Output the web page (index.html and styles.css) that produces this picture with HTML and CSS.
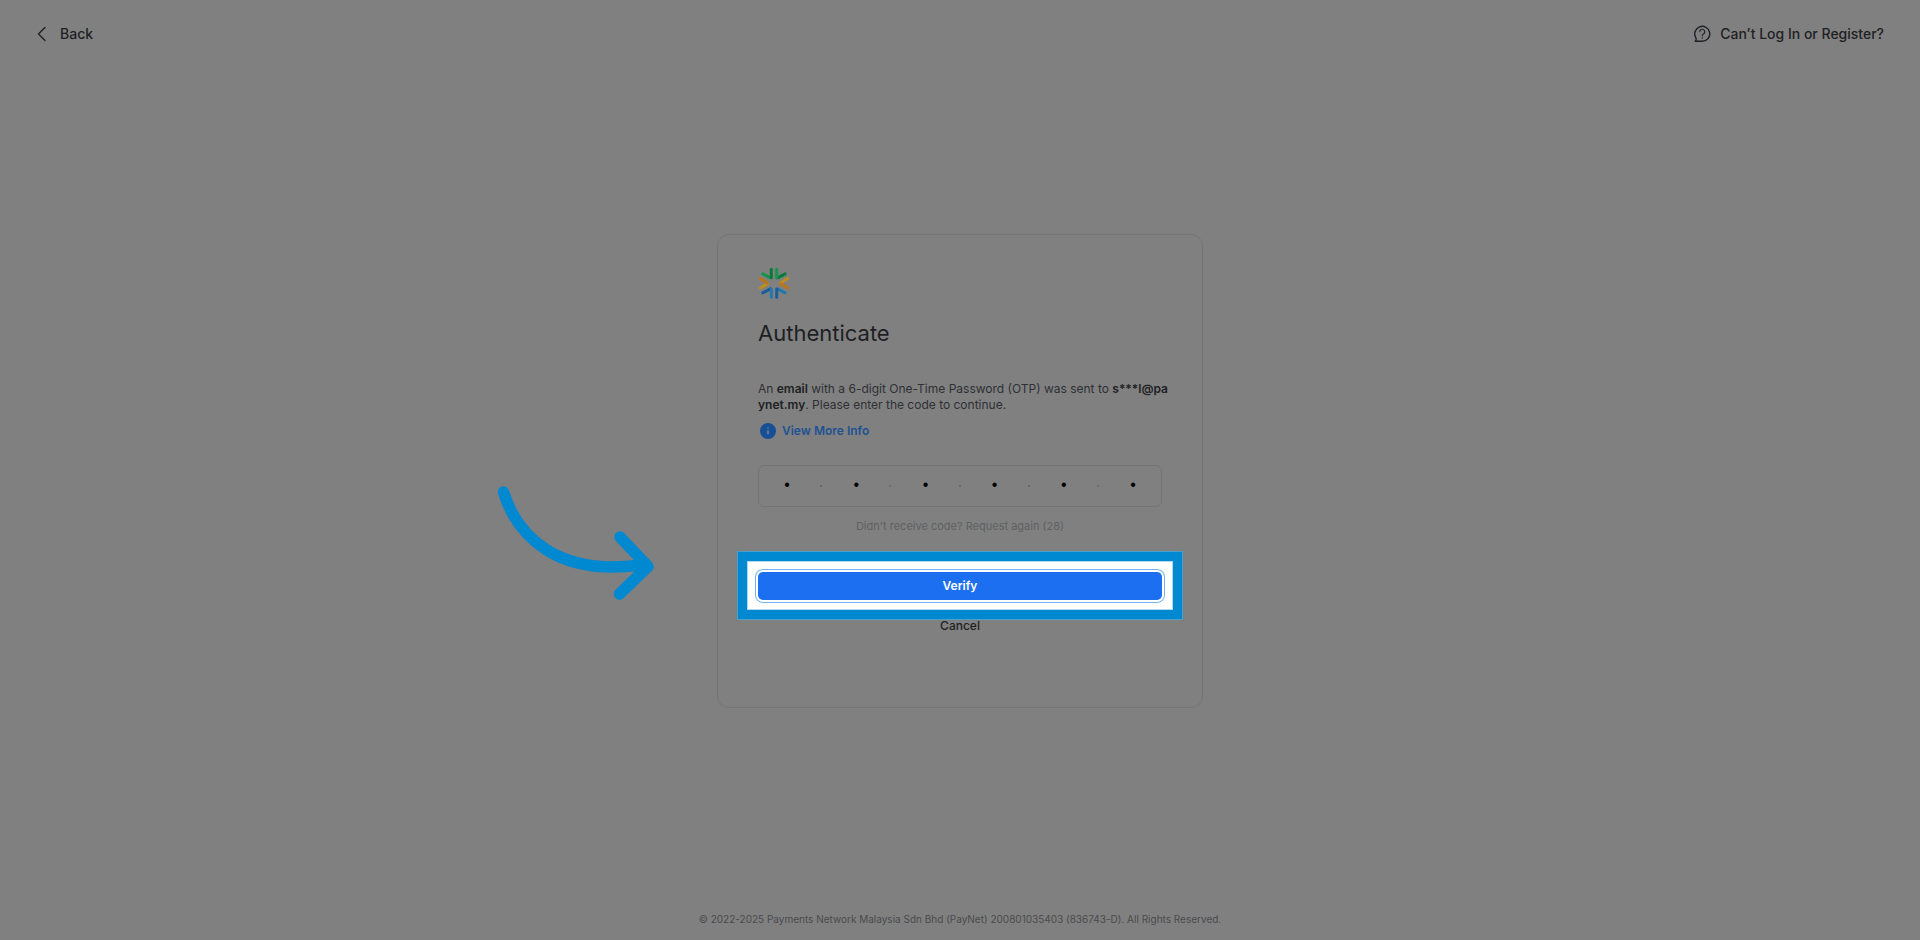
FILE: index.html
```html
<!DOCTYPE html>
<html lang="en">
<head>
<meta charset="utf-8">
<title>Authenticate</title>
<link rel="stylesheet" href="styles.css">
</head>
<body class="page">
  <header class="topbar">
    <button class="top-button" type="button">
      <svg class="top-icon" viewBox="0 0 18 18" aria-hidden="true"><path d="M12 2.500 5.500 9l6.500 6.500"/></svg>
      Back
    </button>
    <button class="top-button" type="button">
      <svg class="top-icon" viewBox="0 0 18 18" aria-hidden="true"><path d="M2.200 16.300h7A7.500 7.500 0 1 0 2.900 12.800c.4.700.3 1.500 0 2.200z"/><path stroke-width="1.1" d="M6.700 6.800a2.500 2.500 0 1 1 3.700 2.100c-.9.500-1.200.9-1.200 1.900M9.200 12.600v.6"/></svg>
      Can’t Log In or Register?
    </button>
  </header>

  <main class="card">
    <svg class="logo" viewBox="0 0 32 32" role="img" aria-label="PayNet">
      <g fill="none" stroke-width="3" stroke-linecap="round" stroke-linejoin="round">
        <path stroke="#14944c" d="M4.800 6.900 12.500 10.800"/><path stroke="#087a38" d="M13.300 2.300V10.800"/>
        <path stroke="#087a38" d="M27.200 6.900 19.500 10.800"/><path stroke="#14944c" d="M18.700 2.300V10.800"/>
        <path stroke="#bd8d20" d="M2.300 21 9.200 17"/><path stroke="#b97518" d="M2.300 11.500 9.200 15.700"/>
        <path stroke="#bd8d20" d="M29.700 11.500 22.800 15.700"/><path stroke="#b97518" d="M29.700 21 22.800 17"/>
        <path stroke="#1b5d99" d="M4.800 25.800 12.500 21.900"/><path stroke="#2078ad" d="M13.300 30.300V21.900"/>
        <path stroke="#2078ad" d="M27.200 25.800 19.500 21.900"/><path stroke="#1b5d99" d="M18.700 30.300V21.900"/>
      </g>
    </svg>
    <h1 class="title">Authenticate</h1>
    <p class="message">An <strong>email</strong> with a 6-digit One-Time Password (OTP) was sent to <strong>s***l@pa<br>ynet.my</strong>. Please enter the code to continue.</p>
    <a class="info-link" href="#info">
      <svg class="info-icon" viewBox="0 0 16 16" aria-hidden="true"><circle cx="8" cy="8" r="8"/><path d="M8 4.500v1.200M8 7.300v4.200"/></svg>
      View More Info
    </a>
    <form class="form">
      <div class="code" role="group" aria-label="One-Time Password">
        <input class="digit" type="password" maxlength="1" value="1" aria-label="Digit 1"><span class="separator"></span>
        <input class="digit" type="password" maxlength="1" value="1" aria-label="Digit 2"><span class="separator"></span>
        <input class="digit" type="password" maxlength="1" value="1" aria-label="Digit 3"><span class="separator"></span>
        <input class="digit" type="password" maxlength="1" value="1" aria-label="Digit 4"><span class="separator"></span>
        <input class="digit" type="password" maxlength="1" value="1" aria-label="Digit 5"><span class="separator"></span>
        <input class="digit" type="password" maxlength="1" value="1" aria-label="Digit 6">
      </div>
      <p class="resend">Didn't receive code? Request again (28)</p>
      <div class="action">
        <div class="spotlight" aria-hidden="true">
          <svg class="arrow" viewBox="0 0 190 140"><path d="M23.500 21C38 68 80 105 160 94L166 95M140 66 168 95.500 139.500 123"/></svg>
        </div>
        <button class="verify" type="button">Verify</button>
      </div>
      <button class="cancel" type="button">Cancel</button>
    </form>
  </main>

  <footer class="footer">© 2022-2025 Payments Network Malaysia Sdn Bhd (PayNet) 200801035403 (836743-D). All Rights Reserved.</footer>
</body>
</html>
```
FILE: styles.css
```css
* {
  box-sizing: border-box;
}

.page {
  margin: 0;
  min-height: 100vh;
  display: grid;
  grid-template-rows: 1fr auto 1fr;
  justify-items: center;
  background: #808080;
  color: #1d1f24;
  font-family: Inter, "Liberation Sans", sans-serif;
  font-size: 12px;
  line-height: 16px;
}

button {
  font: inherit;
  color: inherit;
  background: none;
  border: 0;
  padding: 0;
}

.topbar {
  width: 100%;
  align-self: start;
  display: flex;
  justify-content: space-between;
  padding: 24px 36px 0 33px;
}

.top-button {
  display: flex;
  align-items: center;
  gap: 9px;
  font-size: 14px;
  font-weight: 500;
  line-height: 20px;
}

.top-icon {
  width: 18px;
  height: 18px;
  fill: none;
  stroke: #1d1f24;
  stroke-width: 1.4;
  stroke-linecap: round;
  stroke-linejoin: round;
}

.card {
  width: 486px;
  max-width: 100%;
  min-height: 474px;
  margin-top: 2px;
  padding: 32px 40px;
  border: 1px solid #757576;
  border-radius: 12px;
}

.logo {
  display: block;
  width: 32px;
  height: 32px;
}

.title {
  margin: 18px 0 32px;
  font-size: 22px;
  font-weight: 400;
  line-height: 32px;
}

.message {
  margin: 0;
  color: #2e3035;
  white-space: nowrap;
}

.message strong {
  font-weight: 600;
  color: #1d1f24;
}

.info-link {
  display: flex;
  align-items: center;
  gap: 6px;
  width: fit-content;
  margin: 10px 0 0 2px;
  color: #1e5193;
  font-weight: 600;
  text-decoration: none;
}

.info-icon {
  width: 16px;
  height: 16px;
  fill: #174f96;
}

.info-icon path {
  stroke: #7b8794;
  stroke-width: 1.4;
}

.form {
  display: flex;
  flex-direction: column;
  margin-top: 26px;
}

.code {
  display: flex;
  align-items: center;
  height: 42px;
  border: 1px solid #747474;
  border-radius: 6px;
}

.digit {
  flex: 1;
  min-width: 0;
  padding: 0 0 2px;
  border: 0;
  outline: 0;
  background: none;
  color: #000;
  font: 16px "Liberation Sans", sans-serif;
  text-align: center;
}

.separator {
  flex: none;
  width: 2px;
  height: 2px;
  margin: 0 6px 0 5px;
  border-radius: 1px;
  background: #666;
}

.resend {
  margin: 11px 0 0;
  color: #5f6062;
  font-size: 11px;
  text-align: center;
}

.action {
  position: relative;
  margin-top: 38px;
}

.verify {
  position: relative;
  display: block;
  width: 100%;
  height: 28px;
  border-radius: 5px;
  background: #1d6ff2;
  box-shadow: 0 0 0 2px #fff, 0 0 0 3px #78b4f5;
  color: #fff;
  font-weight: 600;
}

.spotlight {
  position: absolute;
  inset: -21px -21px -20px;
  border: 10px solid #0088d0;
  outline: 1px solid #4a9fc8;
  outline-offset: -1px;
  background: #fff;
  box-shadow: inset 0 0 0 1px #b0d8ee;
}

.arrow {
  position: absolute;
  left: -267px;
  top: -90px;
  width: 190px;
  height: 140px;
  fill: none;
  stroke: #0088d0;
  stroke-width: 11.5;
  stroke-linecap: round;
  stroke-linejoin: round;
}

.cancel {
  align-self: center;
  margin-top: 18px;
  font-weight: 500;
}

.footer {
  align-self: end;
  padding: 0 16px 13px;
  color: #4a4b4e;
  font-size: 10px;
  text-align: center;
}
```
